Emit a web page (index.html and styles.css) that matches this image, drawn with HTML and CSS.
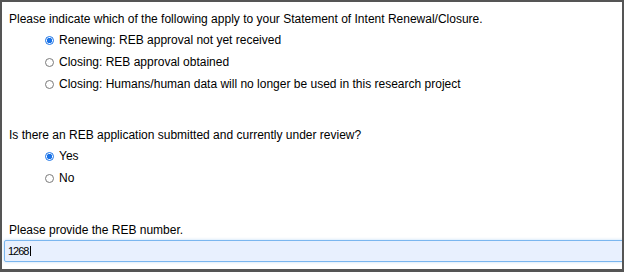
FILE: index.html
```html
<!DOCTYPE html>
<html>
<head>
<meta charset="utf-8">
<link rel="stylesheet" href="styles.css">
</head>
<body>
<div class="frame">
  <p class="question q1">Please indicate which of the following apply to your Statement of Intent Renewal/Closure.</p>
  <ul class="options">
    <li class="option"><span class="radio checked"></span><span>Renewing: REB approval not yet received</span></li>
    <li class="option"><span class="radio"></span><span>Closing: REB approval obtained</span></li>
    <li class="option"><span class="radio"></span><span>Closing: Humans/human data will no longer be used in this research project</span></li>
  </ul>
  <p class="question q2">Is there an REB application submitted and currently under review?</p>
  <ul class="options">
    <li class="option"><span class="radio checked"></span><span>Yes</span></li>
    <li class="option"><span class="radio"></span><span>No</span></li>
  </ul>
  <p class="question q3">Please provide the REB number.</p>
  <div class="field"><span class="value">1268</span><span class="caret"></span></div>
</div>
</body>
</html>
```

FILE: styles.css
```css
html, body {
  margin: 0;
  padding: 0;
  background: #ffffff;
}
.frame {
  box-sizing: border-box;
  width: 624px;
  height: 272px;
  border: 2px solid #555555;
  border-bottom-width: 3px;
  background: #ffffff;
  font-family: "Liberation Sans", Arial, sans-serif;
  font-size: 12px;
  color: #000000;
  overflow: hidden;
  display: flex;
  flex-direction: column;
}
.question {
  margin: 0;
  padding-left: 7px;
  line-height: 15px;
}
.q1 { margin-top: 10px; }
.q2 { margin-top: 36px; }
.q3 { margin-top: 37px; }
.options {
  list-style: none;
  margin: 6px 0 0 0;
  padding: 0 0 0 43px;
  display: flex;
  flex-direction: column;
  gap: 7px;
}
.option {
  display: flex;
  align-items: center;
  gap: 5px;
  line-height: 15px;
  height: 15px;
}
.radio {
  box-sizing: border-box;
  width: 9px;
  height: 9px;
  border-radius: 50%;
  border: 1px solid #7a7a7a;
  background: #ffffff;
  flex: none;
}
.radio.checked {
  border-color: #1a73e8;
  background: radial-gradient(circle, #1a73e8 0 2.5px, #ffffff 3px);
}
.field {
  box-sizing: border-box;
  margin: 2px 0 0 2px;
  height: 22px;
  width: 630px;
  background: #e8f0fe;
  border: 1px solid #7ab6ef;
  border-radius: 2px;
  box-shadow: 0 0 3px rgba(122, 182, 239, 0.5);
  display: flex;
  align-items: center;
  padding-left: 3px;
  font-size: 11px;
  letter-spacing: -1px;
}
.caret {
  width: 1px;
  height: 10px;
  background: #000000;
  margin-left: 2px;
}
```
